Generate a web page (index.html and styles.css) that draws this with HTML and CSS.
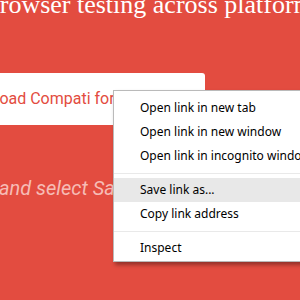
FILE: index.html
```html
<!DOCTYPE html>
<html lang="en">
<head>
    <meta charset="UTF-8">
    <meta name="viewport" content="width=device-width, initial-scale=1.0">
    <title>Compati</title>
    <link rel="stylesheet" href="styles.css">
</head>
<body>
    <div class="hero">
        <h1 class="title">Cross browser testing across platforms</h1>
        <a class="download">Download Compati for Chrome</a>
        <p class="hint">Right click the download link for your browser and select Save link as</p>
    </div>

    <div class="context-menu">
        <div class="menu-item">Open link in new tab</div>
        <div class="menu-item">Open link in new window</div>
        <div class="menu-item">Open link in incognito window</div>
        <div class="menu-sep"></div>
        <div class="menu-item active">Save link as...</div>
        <div class="menu-item">Copy link address</div>
        <div class="menu-sep"></div>
        <div class="menu-item">Inspect</div>
    </div>
</body>
</html>
```

FILE: styles.css
```css
html, body {
    margin: 0;
    padding: 0;
    width: 100%;
    height: 100%;
    overflow: hidden;
    background: #e34c40;
}

.hero {
    white-space: nowrap;
}

.title {
    margin: -11px 0 0 -79px;
    font-family: 'Liberation Serif', serif;
    font-weight: normal;
    font-size: 26px;
    line-height: 32px;
    color: #fff;
}

/* white download button, mostly scrolled out of view */
.download {
    display: block;
    box-sizing: border-box;
    width: 265px;
    height: 52px;
    margin: 52px 0 0 -60px;
    padding-left: 15px;
    border-radius: 3px;
    background: #fff;
    color: #e34c40;
    font-family: Roboto, sans-serif;
    font-size: 16px;
    line-height: 52px;
}

.hint {
    margin: 51px 0 0 -398px;
    font-family: Roboto, sans-serif;
    font-style: italic;
    font-size: 20px;
    line-height: 24px;
    color: #f6bcb6;
}

/* browser context menu */
.context-menu {
    position: absolute;
    top: 90px;
    left: 113px;
    width: 230px;
    padding: 5px 0 1px;
    background: #fff;
    border: 1px solid #bababa;
    box-shadow: 2px 3px 4px rgba(0, 0, 0, 0.35);
    font-family: 'Noto Sans', sans-serif;
    font-size: 12px;
    color: #000;
}

.menu-item {
    height: 24px;
    line-height: 24px;
    padding-left: 26px;
    white-space: nowrap;
}

.menu-item.active {
    background: #e8e8e8;
}

.menu-sep {
    height: 1px;
    margin: 5px 0 4px;
    background: #e9e9e9;
}
```
